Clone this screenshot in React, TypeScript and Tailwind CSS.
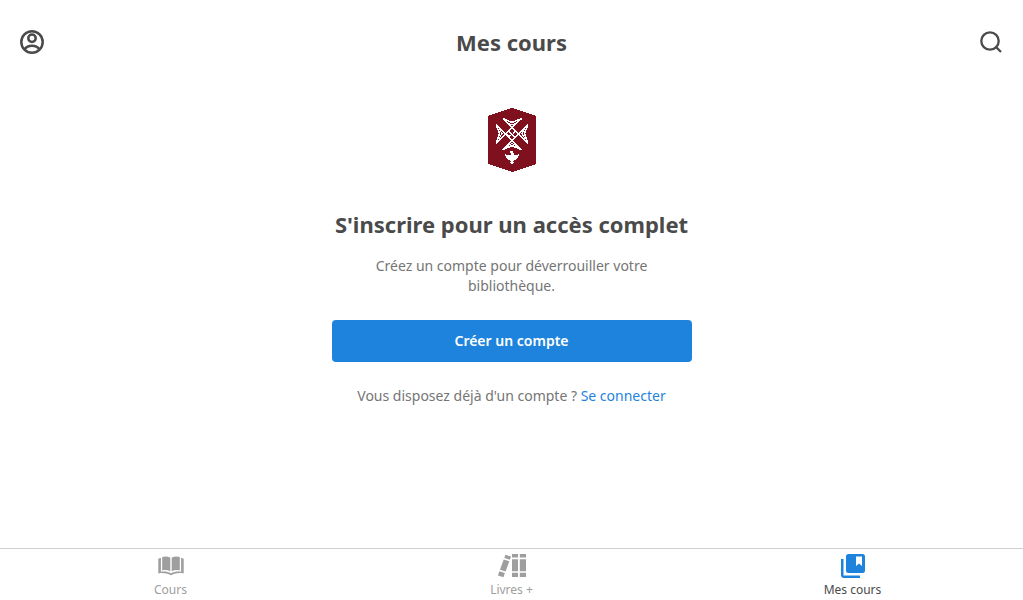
import React, { useState } from 'react'
import clsx from 'clsx'

type TabId = 'courses' | 'books' | 'mine'

interface IconProps {
  className?: string
}

function AccountIcon() {
  return (
    <svg className="h-6 w-6" viewBox="0 0 24 24" fill="none" stroke="currentColor" strokeWidth="2.5" aria-hidden="true">
      <circle cx="12" cy="12" r="10.7" />
      <circle cx="12" cy="8.2" r="3.7" />
      <path d="M4.6 19.3C6.2 17 8.8 15.8 12 15.8s5.8 1.2 7.4 3.5" />
    </svg>
  )
}

function SearchIcon() {
  return (
    <svg className="h-6 w-6" viewBox="0 0 24 24" fill="none" stroke="currentColor" strokeWidth="2.3" aria-hidden="true">
      <circle cx="11" cy="11" r="8.7" />
      <path d="M17 17l5 5" />
    </svg>
  )
}

function Logo() {
  return (
    <svg className="h-16 w-12" viewBox="0 0 48 64" shapeRendering="crispEdges" aria-hidden="true">
      <path d="M24 0l24 8v48l-24 8-24-8V8z" fill="#7f111f" />
      <g fill="none" stroke="#fff" strokeWidth="1.5">
        <path d="M22 30L8 16.500L11.500 25.500L8 35.500L22.500 21" />
        <path d="M29 24.500L15 10.500L24 14.500L33.500 10.500L19.500 24" />
        <path d="M26 21.500L40 35.500L36.500 25.500L40 16.500L25.500 31" />
        <path d="M19 27L33.500 42L24 37.500L14.500 42L28.500 28" />
        <path d="M20.500 23l6 6M27.500 23l-2.500 2.500M20.500 29l2-2" />
      </g>
      <g fill="none" stroke="#fff" strokeWidth="1">
        <path d="M18.500 14.500l5.500 2.500 5.500-2.500" />
        <path d="M18.500 38.500l5.500-3 5.500 3" />
        <path d="M11 20l3 5.500-3 5.500" />
        <path d="M37 20l-3 5.500 3 5.500" />
      </g>
      <path
        d="M16.500 46c2 1.300 3.900 1.500 6 1v-2l-1.500-1 2-1.200c1.600 0 2.500.8 2.500 2.200v2c2.100.5 4 .3 6-1-.3 3.200-2.300 5.300-5.500 6.500l-.8 1.200.8 1.300-2 1.500-2-1.500.8-1.300-.8-1.200c-3.200-1.200-5.200-3.300-5.500-6.500z"
        fill="#fff"
      />
    </svg>
  )
}

function OpenBookIcon({ className }: IconProps) {
  return (
    <svg className={className} viewBox="0 0 26 24" fill="currentColor" aria-hidden="true">
      <path d="M4.200 3C7.200 2 10 2.300 12.300 3.800v13.400C9.800 15.900 7 15.700 4.200 16.400z" />
      <path d="M21.800 3c-3-1-5.800-.7-8.100.8v13.400c2.500-1.300 5.300-1.500 8.100-.8z" />
      <path d="M.3 4.700l2.600-.9v13.900c3.800-.6 7.100 0 10.100 1.500 3-1.500 6.300-2.100 10.100-1.500V3.800l2.600.9v14.700c-4.500-.7-8.800-.2-12.700 1.800-3.900-2-8.200-2.500-12.700-1.800z" />
    </svg>
  )
}

function ShelfIcon({ className }: IconProps) {
  return (
    <svg className={className} viewBox="0 0 28 24" fill="currentColor" aria-hidden="true">
      <path d="M14 0h6v3.600h-6zM14 5.200h6v12h-6zM14 18.700h6v4.400h-6z" />
      <path d="M21.800 0H28v3.600h-6.200zM21.800 5.200H28v12h-6.200zM21.800 18.700H28v4.400h-6.200z" />
      <path d="M7.400.7l5.600 1.800-1.100 3.200-5.600-1.800zM5.700 5.400l5.600 1.800-3.700 10.300-5.600-1.800zM1.300 17.300l5.600 1.800-1.400 4.200L0 21.500z" />
    </svg>
  )
}

function LibraryIcon({ className }: IconProps) {
  return (
    <svg className={className} viewBox="0 0 24 24" fill="currentColor" aria-hidden="true">
      <path d="M0 5h2.500v16.500H19V24H3a3 3 0 0 1-3-3z" />
      <path fillRule="evenodd" d="M7.500 0h14A2.500 2.500 0 0 1 24 2.500v14a2.500 2.500 0 0 1-2.500 2.500h-14A2.500 2.500 0 0 1 5 16.500v-14A2.500 2.500 0 0 1 7.500 0zM15 2.500v9.500l3-2.500 3 2.500V2.500z" />
    </svg>
  )
}

const tabs = [
  { id: 'courses', label: 'Cours', Icon: OpenBookIcon, size: 'h-6 w-[26px]' },
  { id: 'books', label: 'Livres +', Icon: ShelfIcon, size: 'h-6 w-7' },
  { id: 'mine', label: 'Mes cours', Icon: LibraryIcon, size: 'h-6 w-6' },
] as const

export default function App() {
  const [active, setActive] = useState<TabId>('mine')

  return (
    <div className="flex min-h-screen flex-col bg-white font-['Noto_Sans',sans-serif] text-[#4a4a4a]">
      <header className="flex h-[84px] items-center justify-between px-5">
        <button type="button" aria-label="Profil">
          <AccountIcon />
        </button>
        <h1 className="text-[22px] leading-8 font-bold">Mes cours</h1>
        <button type="button" aria-label="Rechercher">
          <SearchIcon />
        </button>
      </header>

      <main className="flex flex-1 flex-col items-center px-4 pt-6 text-sm leading-5 text-[#757575]">
        <Logo />
        <h2 className="mt-9 text-center text-[22px] leading-8 font-bold text-[#4a4a4a]">
          S'inscrire pour un accès complet
        </h2>
        <p className="mt-4 w-full max-w-[320px] text-center">
          Créez un compte pour déverrouiller votre bibliothèque.
        </p>
        <button
          type="button"
          className="mt-6 h-[42px] w-full max-w-[360px] rounded bg-[#1e83dc] font-semibold text-white"
        >
          Créer un compte
        </button>
        <p className="mt-6 text-center">
          Vous disposez déjà d'un compte ?{' '}
          <a href="#connexion" className="text-[#1e83dc]">
            Se connecter
          </a>
        </p>
      </main>

      <nav className="grid grid-cols-3 border-t border-[#cfcfcf]">
        {tabs.map(({ id, label, Icon, size }) => (
          <button
            key={id}
            type="button"
            aria-current={active === id ? 'page' : undefined}
            onClick={() => setActive(id)}
            className="flex flex-col items-center gap-1 pt-[5px] pb-0.5"
          >
            <Icon className={clsx(size, active === id ? 'text-[#1e83dc]' : 'text-[#9e9e9e]')} />
            <span className={clsx('text-xs leading-4', active === id ? 'text-[#4a4a4a]' : 'text-[#9e9e9e]')}>
              {label}
            </span>
          </button>
        ))}
      </nav>
    </div>
  )
}
